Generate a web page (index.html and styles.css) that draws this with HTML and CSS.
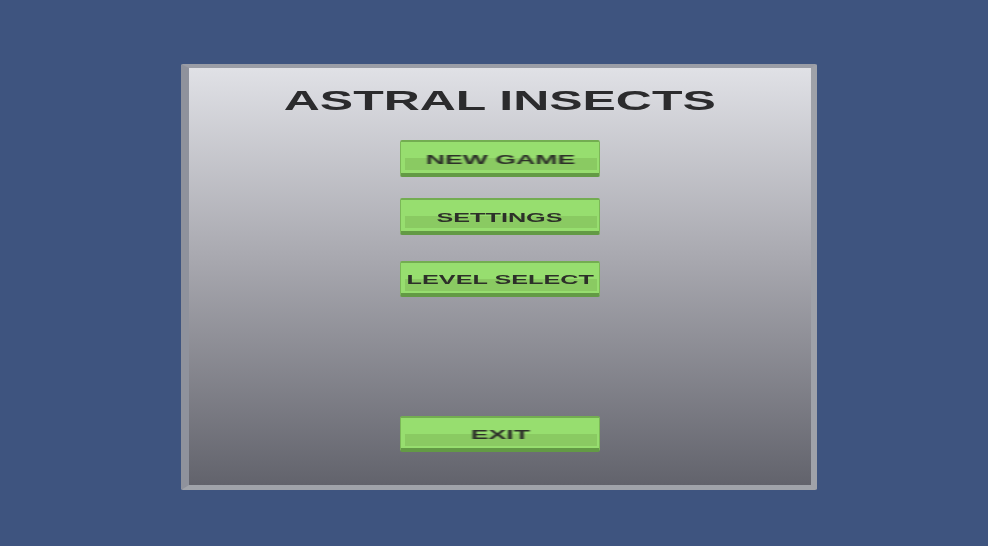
FILE: index.html
```html
<!DOCTYPE html>
<html lang="en">
<head>
    <meta charset="UTF-8">
    <meta name="viewport" content="width=device-width, initial-scale=1.0">
    <title>Astral Insects</title>
    <link rel="stylesheet" href="styles.css">
</head>
<body>

    <div class="panel">
        <h1 class="title"><span>ASTRAL INSECTS</span></h1>
        <button class="menu-button"><span class="label">NEW GAME</span></button>
        <button class="menu-button settings"><span class="label label-narrow">SETTINGS</span></button>
        <button class="menu-button level"><span class="label label-narrow">LEVEL SELECT</span></button>
        <button class="menu-button exit"><span class="label">EXIT</span></button>
    </div>

</body>
</html>
```

FILE: styles.css
```css
html, body {
    height: 100%;
}
body {
    margin: 0;
    padding-left: 10px;
    box-sizing: border-box;
    background-color: #3e547f;
    font-family: "Liberation Sans", Arial, sans-serif;
    display: flex;
    justify-content: center;
    overflow: hidden;
}
.panel {
    box-sizing: border-box;
    width: 636px;
    height: 426px;
    margin-top: 64px;
    padding: 0 0 33px 0;
    display: flex;
    flex-direction: column;
    align-items: center;
    border-style: solid;
    border-width: 4px 6px 5px 8px;
    border-color: #9a9da6 #9fa2a9 #a0a3aa #8f929c;
    border-radius: 2px;
    background: linear-gradient(#e0e1e6, #a9a9b0 45%, #62636c);
}
.title {
    margin: 18px 0 0;
    height: 54px;
    width: 100%;
    font-size: 27px;
    line-height: 30px;
    font-weight: bold;
    color: #2b2b2d;
    text-align: center;
}
.title span {
    display: inline-block;
    transform: scaleX(1.85);
    filter: blur(0.4px);
}
.menu-button {
    box-sizing: border-box;
    width: 200px;
    height: 37px;
    flex: none;
    padding: 3px 0 0;
    border-style: solid;
    border-width: 2px 1px 4px;
    border-color: #73ad51 #7bb757 #639a45;
    border-radius: 2px;
    background: linear-gradient(#8aca62, #8aca62) no-repeat 4px 16px / 192px 12px, #97de6f;
    color: #2d3029;
    font-family: "Liberation Sans", Arial, sans-serif;
    font-size: 13px;
    font-weight: bold;
    line-height: 15px;
}
.label {
    display: inline-block;
    transform: scaleX(2.05);
    filter: blur(0.4px);
}
.label-narrow {
    transform: scaleX(1.94);
}
.settings {
    margin-top: 21px;
}
.level {
    margin-top: 26px;
    height: 36px;
}
.exit {
    margin-top: auto;
    height: 36px;
}
```
